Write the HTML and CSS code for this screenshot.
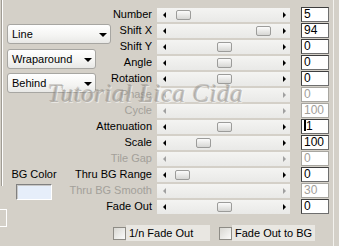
FILE: index.html
```html
<!DOCTYPE html>
<html lang="en">
<head>
  <meta charset="UTF-8">
  <title>Pattern Settings</title>
  <link rel="stylesheet" href="styles.css">
</head>
<body>
  <main class="dialog">
    <!-- Left side: mode pickers and background colour -->
    <section class="left">
      <div class="group">
        <div class="combo combo-wide">Line</div>
        <div class="combo">Wraparound</div>
        <div class="combo">Behind</div>
        <div class="bg-color">
          <span>BG Color</span>
          <div class="swatch"></div>
        </div>
      </div>
      <div class="stub"></div>
    </section>

    <!-- Right side: parameter sliders -->
    <section class="params">
      <div class="row">
        <label class="label">Number</label>
        <div class="slider"><i class="arrow-left"></i><span class="thumb" style="left: 19px"></span><i class="arrow-right"></i></div>
        <div class="field">5</div>
      </div>
      <div class="row">
        <label class="label">Shift X</label>
        <div class="slider"><i class="arrow-left"></i><span class="thumb" style="left: 99px"></span><i class="arrow-right"></i></div>
        <div class="field">94</div>
      </div>
      <div class="row">
        <label class="label">Shift Y</label>
        <div class="slider"><i class="arrow-left"></i><span class="thumb" style="left: 60px"></span><i class="arrow-right"></i></div>
        <div class="field">0</div>
      </div>
      <div class="row">
        <label class="label">Angle</label>
        <div class="slider"><i class="arrow-left"></i><span class="thumb" style="left: 60px"></span><i class="arrow-right"></i></div>
        <div class="field">0</div>
      </div>
      <div class="row">
        <label class="label">Rotation</label>
        <div class="slider"><i class="arrow-left"></i><span class="thumb" style="left: 60px"></span><i class="arrow-right"></i></div>
        <div class="field">0</div>
      </div>
      <div class="row disabled">
        <label class="label">Phase</label>
        <div class="slider"><i class="arrow-left"></i><i class="arrow-right"></i></div>
        <div class="field">0</div>
      </div>
      <div class="row disabled">
        <label class="label">Cycle</label>
        <div class="slider"><i class="arrow-left"></i><i class="arrow-right"></i></div>
        <div class="field">100</div>
      </div>
      <div class="row">
        <label class="label">Attenuation</label>
        <div class="slider"><i class="arrow-left"></i><span class="thumb" style="left: 60px"></span><i class="arrow-right"></i></div>
        <div class="field"><span class="caret"></span>1</div>
      </div>
      <div class="row">
        <label class="label">Scale</label>
        <div class="slider"><i class="arrow-left"></i><span class="thumb" style="left: 39px"></span><i class="arrow-right"></i></div>
        <div class="field">100</div>
      </div>
      <div class="row disabled">
        <label class="label">Tile Gap</label>
        <div class="slider"><i class="arrow-left"></i><i class="arrow-right"></i></div>
        <div class="field">0</div>
      </div>
      <div class="row">
        <label class="label">Thru BG Range</label>
        <div class="slider"><i class="arrow-left"></i><span class="thumb" style="left: 18px"></span><i class="arrow-right"></i></div>
        <div class="field">0</div>
      </div>
      <div class="row disabled">
        <label class="label">Thru BG Smooth</label>
        <div class="slider"><i class="arrow-left"></i><i class="arrow-right"></i></div>
        <div class="field">30</div>
      </div>
      <div class="row">
        <label class="label">Fade Out</label>
        <div class="slider"><i class="arrow-left"></i><span class="thumb" style="left: 60px"></span><i class="arrow-right"></i></div>
        <div class="field">0</div>
      </div>

      <div class="checks">
        <span class="checkbox"></span>
        <span class="check-label check-label-first">1/n Fade Out</span>
        <span class="checkbox"></span>
        <span class="check-label">Fade Out to BG</span>
      </div>
    </section>

    <div class="watermark">Tutorial Lica Cida</div>
  </main>
</body>
</html>
```

FILE: styles.css
```css
/* Reset */
*, *::before, *::after {
  box-sizing: border-box;
  margin: 0;
  padding: 0;
}

:root {
  --face: #d4d0c8;
  --text: #000000;
  --text-disabled: #a3a09a;
  --track: #eeeeec;
  --font: "Liberation Sans", Arial, sans-serif;
}

body {
  background: var(--face);
  font-family: var(--font);
  font-size: 11px;
  color: var(--text);
}

/* Both halves share one grid cell and sit on top of each other */
.dialog {
  position: relative;
  display: grid;
  width: 334px;
  height: 246px;
  border-right: 1px solid #f3f2ee;
  overflow: hidden;
}

.dialog > .left,
.dialog > .params {
  grid-area: 1 / 1;
}

/* Left column */
.left {
  display: flex;
  flex-direction: column;
  align-items: flex-start;
  z-index: 1;
}

.group {
  display: flex;
  flex-direction: column;
  align-items: flex-start;
  height: 186px;
  margin-left: 2px;
  padding: 24px 0 0 4px;
  border-left: 1px solid #ffffff;
  box-shadow: -1px 0 0 #a09c94;
}

.combo {
  position: relative;
  width: 89px;
  height: 20px;
  padding-left: 4px;
  line-height: 18px;
  font-size: 11px;
  background: linear-gradient(#ffffff, #f4f4f2 60%, #e8e8e6);
  border: 1px solid #a7a6a2;
  border-radius: 3px;
  margin-bottom: 4px;
}

.combo-wide {
  width: 104px;
  margin-bottom: 5px;
}

.combo::after {
  content: '';
  position: absolute;
  right: 3px;
  top: 8px;
  border-left: 4px solid transparent;
  border-right: 4px solid transparent;
  border-top: 4px solid #000;
}

.bg-color {
  display: flex;
  flex-direction: column;
  align-items: center;
  gap: 3px;
  width: 54px;
  margin-top: 71px;
  line-height: 13px;
}

.swatch {
  width: 36px;
  height: 16px;
  background: #e6eefa;
  border: 1px solid;
  border-color: #808080 #ffffff #ffffff #808080;
  box-shadow: inset 1px 1px 0 #c8c8c8;
}

.stub {
  width: 7px;
  height: 18px;
  margin-top: 23px;
  border: 1px solid #ffffff;
  border-left: none;
}

/* Slider rows */
.params {
  display: flex;
  flex-direction: column;
  padding-top: 7px;
}

.row {
  display: grid;
  grid-template-columns: 157px 144px 28px;
  height: 16px;
}

.label {
  padding-right: 5px;
  text-align: right;
  white-space: nowrap;
  line-height: 15px;
}

.slider {
  position: relative;
  display: flex;
  align-items: center;
  justify-content: space-between;
  width: 133px;
  height: 14px;
  margin-top: 1px;
  padding: 0 4px 0 6px;
  background: linear-gradient(#f4f4f2, #e9e9e7);
}

.arrow-left,
.arrow-right {
  width: 0;
  height: 0;
  border-top: 3px solid transparent;
  border-bottom: 3px solid transparent;
}

.arrow-left {
  border-right: 3px solid #000;
}

.arrow-right {
  border-left: 3px solid #000;
}

.thumb {
  position: absolute;
  top: 2px;
  width: 15px;
  height: 10px;
  border: 1px solid #9c9c9a;
  border-radius: 2px;
  background: linear-gradient(#fbfbfb, #e2e2e0 70%, #d6d6d4);
}

.field {
  height: 15px;
  padding-left: 2px;
  font-size: 12px;
  line-height: 13px;
  background: #ffffff;
  border: 1px solid;
  border-color: #3e3e3e #6e6e6e #6e6e6e #3e3e3e;
}

.caret {
  display: inline-block;
  width: 2px;
  height: 11px;
  margin-right: 0;
  vertical-align: -1px;
  background: #000;
}

.disabled .label,
.disabled .field {
  color: var(--text-disabled);
}

.disabled .field {
  border-color: #a8a6a0;
}

.disabled .arrow-left {
  border-right-color: #a0a0a0;
}

.disabled .arrow-right {
  border-left-color: #a0a0a0;
}

/* Checkbox row */
.checks {
  display: flex;
  align-items: center;
  height: 16px;
  margin-top: 10px;
  padding-left: 113px;
}

.checkbox {
  width: 13px;
  height: 13px;
  border: 1px solid #8e8c86;
  background: linear-gradient(135deg, #d8d7d2, #fbfbfa);
}

.check-label {
  height: 16px;
  padding-left: 3px;
  line-height: 16px;
  background: #e9e7e2;
  width: 83px;
}

.check-label-first {
  width: 84px;
  margin-right: 9px;
}

/* Watermark laid over the dialog */
.watermark {
  position: absolute;
  left: 48px;
  top: 80px;
  font-family: "Liberation Serif", serif;
  font-style: italic;
  font-size: 25px;
  letter-spacing: 0.5px;
  color: rgba(150, 146, 140, 0.55);
  text-shadow: 1px 1px 0 rgba(255, 255, 255, 0.5), -1px -1px 0 rgba(110, 106, 100, 0.3);
  pointer-events: none;
  z-index: 2;
}
```
